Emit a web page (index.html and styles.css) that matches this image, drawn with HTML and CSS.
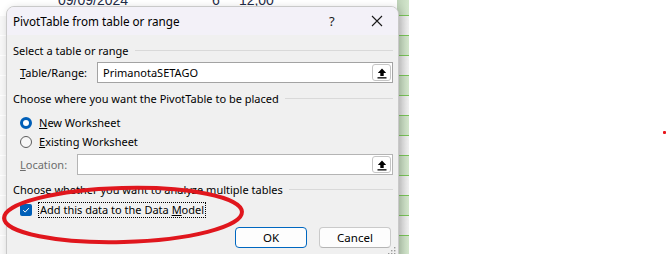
FILE: index.html
```html
<!DOCTYPE html>
<html lang="en">
<head>
    <meta charset="UTF-8">
    <title>PivotTable from table or range</title>
    <link rel="stylesheet" href="styles.css">
</head>
<body>
    <div class="screen">
        <!-- spreadsheet behind the dialog -->
        <div class="sheet">
            <div class="row first">
                <span class="cell date">09/09/2024</span>
                <span class="cell qty">6</span>
                <span class="cell amt">12,00</span>
                <span class="band"></span>
            </div>
            <div class="row alt"><span class="fill"></span><span class="band"></span></div>
            <div class="row"><span class="fill"></span><span class="band"></span></div>
            <div class="row alt"><span class="fill"></span><span class="band"></span></div>
            <div class="row"><span class="fill"></span><span class="band"></span></div>
            <div class="row alt"><span class="fill"></span><span class="band"></span></div>
            <div class="row"><span class="fill"></span><span class="band"></span></div>
            <div class="row alt"><span class="fill"></span><span class="band"></span></div>
            <div class="row"><span class="fill"></span><span class="band"></span></div>
            <div class="row alt"><span class="fill"></span><span class="band"></span></div>
            <div class="row"><span class="fill"></span><span class="band"></span></div>
            <div class="row alt"><span class="fill"></span><span class="band"></span></div>
            <div class="row"><span class="fill"></span><span class="band"></span></div>
            <div class="row alt"><span class="fill"></span><span class="band"></span></div>

            <!-- DIALOG -->
            <div class="dialog">
                <div class="titlebar">
                    <span class="title">PivotTable from table or range</span>
                    <span class="help">?</span>
                    <svg class="close" width="12" height="12" viewBox="0 0 12 12">
                        <path d="M1 1 L11 11 M11 1 L1 11" stroke="#1a1a1a" stroke-width="1.1" fill="none"/>
                    </svg>
                </div>

                <div class="body">
                    <div class="group">
                        <span>Select a table or range</span>
                        <span class="rule"></span>
                    </div>
                    <div class="field range-row">
                        <label class="lbl"><u>T</u>able/Range:</label>
                        <div class="input">
                            <span class="value">PrimanotaSETAGO</span>
                            <span class="pick">
                                <svg width="12" height="12" viewBox="0 0 12 12">
                                    <path d="M6 1.5 L1.8 6 H4.3 V9 H7.7 V6 H10.2 Z" fill="#000"/>
                                    <rect x="1.5" y="10.2" width="9" height="1.3" fill="#000"/>
                                </svg>
                            </span>
                        </div>
                    </div>

                    <div class="group second">
                        <span>Choose where you want the PivotTable to be placed</span>
                        <span class="rule"></span>
                    </div>
                    <div class="option">
                        <span class="radio on"></span>
                        <span><u>N</u>ew Worksheet</span>
                    </div>
                    <div class="option">
                        <span class="radio"></span>
                        <span><u>E</u>xisting Worksheet</span>
                    </div>
                    <div class="field loc-row">
                        <label class="lbl muted"><u>L</u>ocation:</label>
                        <div class="input light">
                            <span class="value"></span>
                            <span class="pick">
                                <svg width="12" height="12" viewBox="0 0 12 12">
                                    <path d="M6 1.5 L1.8 6 H4.3 V9 H7.7 V6 H10.2 Z" fill="#000"/>
                                    <rect x="1.5" y="10.2" width="9" height="1.3" fill="#000"/>
                                </svg>
                            </span>
                        </div>
                    </div>

                    <div class="group third">
                        <span>Choose whether you want to analyze multiple tables</span>
                        <span class="rule"></span>
                    </div>
                    <div class="option check-row">
                        <span class="check">
                            <svg width="12" height="12" viewBox="0 0 12 12">
                                <path d="M3.2 6.2 L5.2 8.1 L8.9 4.1" stroke="#fff" stroke-width="1" fill="none"/>
                            </svg>
                        </span>
                        <span class="focus">Add this data to the Data <u>M</u>odel</span>
                    </div>

                    <div class="buttons">
                        <button class="btn primary">OK</button>
                        <button class="btn">Cancel</button>
                    </div>
                </div>

                <svg class="grip" width="8" height="8" viewBox="0 0 8 8">
                    <rect x="6" y="0" width="1.4" height="1.4" fill="#9a9a9a"/>
                    <rect x="3" y="3" width="1.4" height="1.4" fill="#9a9a9a"/>
                    <rect x="6" y="3" width="1.4" height="1.4" fill="#9a9a9a"/>
                    <rect x="0" y="6" width="1.4" height="1.4" fill="#9a9a9a"/>
                    <rect x="3" y="6" width="1.4" height="1.4" fill="#9a9a9a"/>
                    <rect x="6" y="6" width="1.4" height="1.4" fill="#9a9a9a"/>
                </svg>
            </div>

            <!-- red hand-drawn ring over the checkbox -->
            <svg class="mark" width="260" height="80" viewBox="0 0 260 80">
                <ellipse cx="123" cy="33" rx="119" ry="27" transform="rotate(-1.5 123 33)"
                         fill="none" stroke="#e0161d" stroke-width="4"/>
            </svg>
        </div>

        <div class="blank">
            <span class="dot"></span>
        </div>
    </div>
</body>
</html>
```

FILE: styles.css
```css
body {
    margin: 0;
    background: #fff;
    font-family: "Noto Sans", "Open Sans", sans-serif;
    font-size: 11px;
    color: #000;
}

.screen {
    display: flex;
    width: 667px;
    height: 254px;
    overflow: hidden;
}

/* spreadsheet */
.sheet {
    position: relative;
    width: 409px;
    margin-top: -4px;
}

.row {
    display: flex;
    height: 19px;
    border-bottom: 1px solid #fff;
}

.row .fill,
.row.first {
    flex: 1;
}

.row .fill {
    background: #f7f7f7;
}

.band {
    width: 12px;
    margin-left: auto;
    background: linear-gradient(to right, #bdd1b7, #d3e6cc);
    border-bottom: 1px solid #78c257;
    margin-bottom: -1px;
}

.row.alt .band {
    background: linear-gradient(to right, #d4d4d4, #efefef);
}

.row.first {
    background: #fff;
    font-family: "Liberation Sans", sans-serif;
    font-size: 14px;
    line-height: 12px;
    color: #1f2c48;
}

.cell {
    margin-top: -2px;
}

.date {
    margin-left: 58px;
}

.qty {
    margin-left: 84px;
}

.amt {
    margin-left: 19px;
}

/* dialog window */
.dialog {
    position: absolute;
    left: 6px;
    top: 10px;
    width: 391px;
    height: 252px;
    background: #f0f0f0;
    border: 1px solid #c9c9c9;
    border-radius: 8px 8px 0 0;
    box-shadow: 2px 2px 8px rgba(0, 0, 0, 0.18);
    overflow: hidden;
}

.titlebar {
    display: flex;
    align-items: center;
    height: 28px;
    padding-left: 6px;
    background: #f3f1f8;
}

.title {
    flex: 1;
    font-size: 11.7px;
}

.help {
    width: 12px;
    margin-right: 30px;
    font-size: 13px;
    color: #1a1a1a;
}

.close {
    margin-right: 15px;
}

.body {
    padding: 7px 5px 0 6px;
}

.group {
    display: flex;
    align-items: center;
    gap: 6px;
    height: 16px;
}

.rule {
    flex: 1;
    height: 1px;
    background: #d9d9d9;
}

.group.second {
    margin-top: 7px;
}

.group.third {
    margin-top: 6px;
}

.field {
    display: flex;
    align-items: center;
    padding-left: 7px;
    margin-top: 4px;
}

.lbl {
    width: 77px;
    flex: none;
}

.loc-row .lbl {
    width: 57px;
}

.muted {
    color: #6d6d6d;
}

.input {
    flex: 1;
    display: flex;
    align-items: center;
    height: 19px;
    background: #fff;
    border: 1px solid #a3a3a3;
    padding-left: 5px;
}

.input.light {
    border-color: #b4b4b4;
}

.value {
    flex: 1;
}

.pick {
    display: flex;
    align-items: center;
    justify-content: center;
    width: 19px;
    height: 17px;
    margin-right: 1px;
    border: 1px solid #c5c5c5;
    border-radius: 3px;
    box-sizing: border-box;
}

.option {
    display: flex;
    align-items: center;
    gap: 7px;
    height: 19px;
    padding-left: 7px;
}

.group.second + .option {
    margin-top: 7px;
}

.loc-row {
    margin-top: 3px;
}

.radio {
    width: 12px;
    height: 12px;
    box-sizing: border-box;
    border: 1px solid #5c5c5c;
    border-radius: 50%;
    background: #f7f7f7;
}

.radio.on {
    border: 3.5px solid #005fb8;
    background: #fff;
}

.check-row {
    margin-top: 3px;
}

.check {
    display: flex;
    width: 12px;
    height: 12px;
    background: #005fb8;
    border-radius: 2px;
}

.focus {
    outline: 1px dotted #000;
    outline-offset: 0;
    padding: 0 1px;
    line-height: 14px;
}

.buttons {
    display: flex;
    justify-content: flex-end;
    gap: 12px;
    margin-top: 8px;
    padding-right: 2px;
}

.btn {
    width: 72px;
    height: 21px;
    font-family: inherit;
    font-size: 11.5px;
    color: #000;
    background: #fdfdfd;
    border: 1px solid #cacaca;
    border-bottom-color: #b5b5b5;
    border-radius: 4px;
}

.btn.primary {
    border: 1px solid #0067c0;
}

.grip {
    position: absolute;
    right: 2px;
    bottom: 4px;
}

.mark {
    position: absolute;
    left: 0;
    top: 186px;
}

/* right side */
.blank {
    position: relative;
    flex: 1;
}

.dot {
    position: absolute;
    left: 254px;
    top: 131px;
    width: 3px;
    height: 3px;
    border-radius: 1px;
    background: #e8141b;
}
```
